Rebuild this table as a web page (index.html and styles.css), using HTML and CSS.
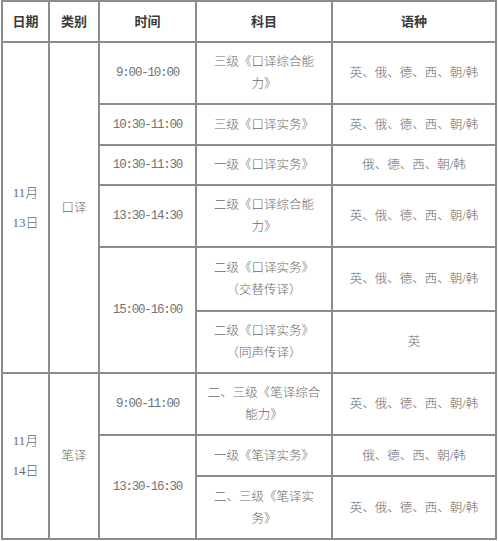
FILE: index.html
```html
<!DOCTYPE html>
<html lang="zh-CN">
<head>
<meta charset="utf-8">
<link rel="stylesheet" href="styles.css">
</head>
<body>
<div class="sheet">
  <div class="cell head">日期</div>
  <div class="cell head">类别</div>
  <div class="cell head">时间</div>
  <div class="cell head">科目</div>
  <div class="cell head">语种</div>

  <div class="cell date d1">11月<br>13日</div>
  <div class="cell kind d1">口译</div>
  <div class="cell time">9:00-10:00</div>
  <div class="cell subj">三级《口译综合能力》</div>
  <div class="cell lang">英、俄、德、西、朝/韩</div>

  <div class="cell time">10:30-11:00</div>
  <div class="cell subj">三级《口译实务》</div>
  <div class="cell lang">英、俄、德、西、朝/韩</div>

  <div class="cell time">10:30-11:30</div>
  <div class="cell subj">一级《口译实务》</div>
  <div class="cell lang">俄、德、西、朝/韩</div>

  <div class="cell time">13:30-14:30</div>
  <div class="cell subj">二级《口译综合能力》</div>
  <div class="cell lang">英、俄、德、西、朝/韩</div>

  <div class="cell time span2">15:00-16:00</div>
  <div class="cell subj">二级《口译实务》<br>（交替传译）</div>
  <div class="cell lang">英、俄、德、西、朝/韩</div>

  <div class="cell subj">二级《口译实务》<br>（同声传译）</div>
  <div class="cell lang">英</div>

  <div class="cell date d2">11月<br>14日</div>
  <div class="cell kind d2">笔译</div>
  <div class="cell time">9:00-11:00</div>
  <div class="cell subj">二、三级《笔译综合能力》</div>
  <div class="cell lang">英、俄、德、西、朝/韩</div>

  <div class="cell time span2">13:30-16:30</div>
  <div class="cell subj">一级《笔译实务》</div>
  <div class="cell lang">俄、德、西、朝/韩</div>

  <div class="cell subj">二、三级《笔译实务》</div>
  <div class="cell lang">英、俄、德、西、朝/韩</div>
</div>
</body>
</html>
```

FILE: styles.css
```css
html, body {
  margin: 0;
  padding: 0;
  background: #fff;
}

.sheet {
  display: grid;
  grid-template-columns: 45px 48px 95px 134px 162px;
  grid-template-rows: 39px 60px 39px 38px 60px 62px 60px 60px 39px 61px;
  gap: 2px;
  padding: 2px;
  margin-left: 1px;
  width: max-content;
  background: #8c8c8c;
  font-family: "Liberation Serif", "Noto Sans CJK SC", serif;
  font-size: 12.5px;
  font-weight: 300;
  color: #6a6a6a;
}

.cell {
  background: #fff;
  display: flex;
  align-items: center;
  justify-content: center;
  text-align: center;
  line-height: 22px;
  padding: 0 8px;
}

.head {
  font-weight: 700;
  color: #3a3a3a;
  font-size: 13px;
  padding: 0;
}

.date {
  line-height: 30px;
  font-size: 13px;
  padding: 0;
}

.kind {
  padding: 0;
}

.d1 {
  grid-row: 2 / span 6;
}

.d2 {
  grid-row: 8 / span 3;
}

.span2 {
  grid-row: span 2;
}

.time {
  font-family: "Liberation Mono", monospace;
  font-size: 12.5px;
  font-weight: 400;
  letter-spacing: -1.2px;
  color: #737373;
  padding: 0;
}

.lang {
  padding: 0;
}
```
